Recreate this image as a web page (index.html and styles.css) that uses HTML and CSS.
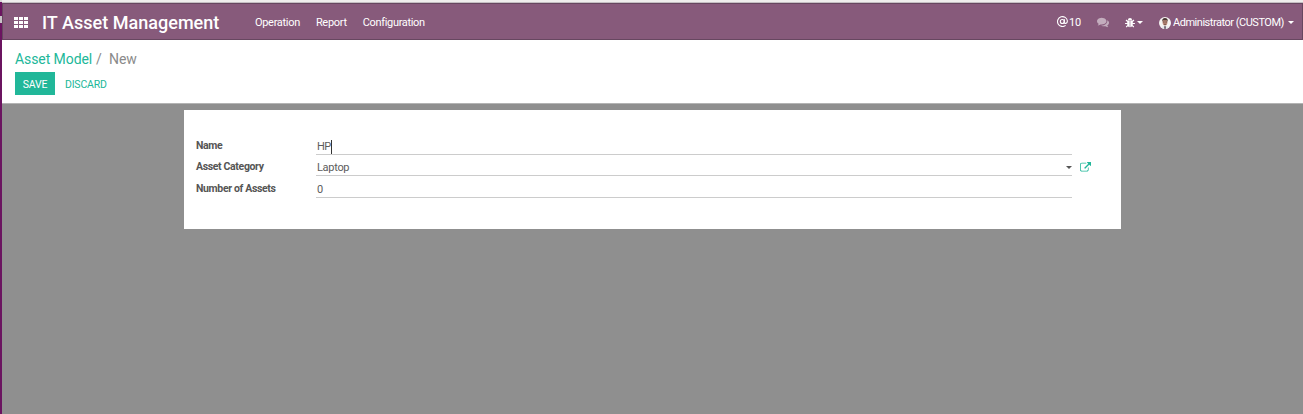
FILE: index.html
```html
<!DOCTYPE html>
<html lang="en">
<head>
<meta charset="utf-8">
<title>New - IT Asset Management</title>
<link rel="stylesheet" href="styles.css">
</head>
<body>
<div class="edge"></div>
<div class="app">
  <header class="navbar">
    <svg class="apps" viewBox="0 0 14 11"><path d="M0 0h4v3H0zM5 0h4v3H5zM10 0h4v3h-4zM0 4h4v3H0zM5 4h4v3H5zM10 4h4v3h-4zM0 8h4v3H0zM5 8h4v3H5zM10 8h4v3h-4z"/></svg>
    <h1 class="brand">IT Asset Management</h1>
    <nav class="menu"><a>Operation</a><a>Report</a><a>Configuration</a></nav>
    <div class="systray">
      <svg class="at" viewBox="0 0 11 11"><g fill="none" stroke="#fff" stroke-width="1.100"><circle cx="5.300" cy="5.500" r="2"/><path d="M7.500 3.200L7.200 6.400C7.200 8 10.400 7.800 10.400 5A4.950 4.950 0 1 0 8.600 9.400"/></g></svg>
      <span class="count">10</span>
      <svg class="comments" viewBox="0 0 1792 1792"><path d="M1408 768q0 139-94 257t-256.500 186.500-353.500 68.500q-86 0-176-16-124 88-278 128-36 9-86 16h-3q-11 0-20.500-8t-11.500-21q-1-3-1-6.500t.5-6.500 2-6l2.500-5 3.500-5.500 4-5 4.500-5 4-4.500q5-6 23-25t26-29.500 22.500-29 25-38.500 20.500-44q-124-72-195-177t-71-224q0-139 94-257t256.500-186.500 353.500-68.500 353.500 68.500 256.500 186.500 94 257zm384 256q0 120-71 224.500t-195 176.500q10 24 20.500 44t25 38.500 22.500 29 26 29.500 23 25q1 1 4 4.500t4.500 5 4 5 3.500 5.500l2.500 5 2 6 .5 6.500-1 6.500q-3 14-13 22t-22 7q-50-7-86-16-154-40-278-128-90 16-176 16-271 0-472-132 58 4 88 4 161 0 309-45t264-129q125-92 192-212t67-254q0-77-23-152 129 71 204 178t75 230z"/></svg>
      <svg class="bug" viewBox="0 0 10 10"><path d="M2.900 2.200a2.100 2.100 0 0 1 4.200 0z"/><path d="M2.200 2.600h2.500v6.600C3 9 2.200 7.800 2.200 6zM5.300 2.600H7.800V6c0 1.800-.8 3-2.500 3.200z"/><path d="M1 2l1.700 1.700M9 2L7.300 3.700M.1 5.500h2.700M9.900 5.500H7.200M1.200 9l1.700-1.700M8.800 9L7.100 7.300" stroke="#fff" stroke-width="1.100"/></svg>
      <i class="caret bug-caret"></i>
      <svg class="avatar" viewBox="0 0 12 12"><circle cx="6" cy="6" r="6" fill="#f5f3f2"/><path d="M2 10.500l2.600-1.700h2.800L10 10.500A6 6 0 0 1 2 10.500z" fill="#e5e6ea"/><ellipse cx="6" cy="5.200" rx="2.400" ry="3.300" fill="#b98777"/><path d="M3.300 5C2.800 2 4 1 6 1s3.200 1 2.700 4L8 3.300H4z" fill="#493832"/><path d="M4 5h1.600M6.400 5H8M5 7.300h2" stroke="#553c36" stroke-width=".7"/><path d="M5.500 9h1l.4 2.700H5.200z" fill="#514350"/></svg>
      <span class="user">Administrator (CUSTOM)</span>
      <i class="caret"></i>
    </div>
  </header>
  <section class="control">
    <div class="crumbs"><a>Asset Model</a><span class="slash">/</span><span>New</span></div>
    <div class="actions"><button class="save">SAVE</button><button class="discard">DISCARD</button></div>
  </section>
  <main class="content">
    <form class="sheet">
      <label>Name</label><div class="field name"><span>HP</span><i class="cursor"></i></div><span></span>
      <label>Asset Category</label><div class="field"><span>Laptop</span><i class="caret dark"></i></div>
      <svg class="external" viewBox="0 0 1792 1792"><path d="M1408 928v320q0 119-84.500 203.500t-203.500 84.500h-832q-119 0-203.500-84.500t-84.500-203.500v-832q0-119 84.500-203.500t203.500-84.500h704q14 0 23 9t9 23v64q0 14-9 23t-23 9h-704q-66 0-113 47t-47 113v832q0 66 47 113t113 47h832q66 0 113-47t47-113v-320q0-14 9-23t23-9h64q14 0 23 9t9 23zm384-864v512q0 26-19 45t-45 19-45-19l-176-176-652 652q-10 10-23 10t-23-10l-114-114q-10-10-10-23t10-23l652-652-176-176q-19-19-19-45t19-45 45-19h512q26 0 45 19t19 45z"/></svg>
      <label class="assets">Number of Assets</label><div class="field"><span>0</span></div><span></span>
    </form>
  </main>
</div>
</body>
</html>
```
FILE: styles.css
```css
* { box-sizing: border-box; }
body { margin: 0; height: 414px; display: flex; overflow: hidden; background: #efeeed; font: 11px/16px Roboto, sans-serif; color: #4c4c4c; }
svg { display: block; flex: none; }
.edge { width: 2px; flex: none; background: linear-gradient(#d9d4d6 0 2px, #6b1460 2px 16px, #c9c3c7 16px 23px, #6b1460 23px); }
.app { flex: 1; min-width: 0; display: flex; flex-direction: column; }
.app::before { content: ""; box-sizing: border-box; height: 3px; flex: none; border-bottom: 1px solid #c5bfc3; }
.navbar { height: 37px; flex: none; display: flex; align-items: center; padding: 0 8px 0 11px; background: #875a7b; border: 1px solid #674760; color: #fff; }
.apps { width: 14px; height: 11px; fill: #fff; margin-top: 1px; }
.brand { margin: 2px 0 0 14px; width: 213px; font-size: 18px; line-height: 24px; font-weight: 500; letter-spacing: .03px; white-space: nowrap; }
.menu { display: flex; gap: 16px; margin-top: 2px; letter-spacing: -.31px; }
.menu a:last-child { letter-spacing: -.33px; }
.systray { margin: 2px 0 0 auto; display: flex; align-items: center; white-space: nowrap; }
.at { width: 11px; height: 11px; margin-top: -2px; }
.count { margin-left: 1px; width: 28px; letter-spacing: -.2px; }
.comments { width: 12px; height: 12px; fill: #c3adbd; margin: -1px 16px 0 0; }
.bug { width: 10px; height: 10px; fill: #fff; }
.caret { border: 3px solid transparent; border-top-color: #fff; border-bottom: 0; width: 6px; height: 3px; flex: none; }
.bug-caret { margin: 0 16px 0 2px; }
.avatar { width: 12px; height: 12px; margin-right: 2px; }
.user { width: 115px; letter-spacing: -.48px; }
.control { height: 64px; flex: none; background: #fff; border-bottom: 1px solid #b4b4b4; padding: 9px 13px 0; }
.crumbs { font-size: 14px; line-height: 20px; color: #8a8a8a; display: flex; letter-spacing: -.08px; }
.crumbs a { color: #21b799; width: 81px; white-space: nowrap; }
.slash { width: 13px; }
.actions { display: flex; margin-top: 3px; }
button { border: 0; padding: 2px 0 0; height: 23px; background: none; font: 10.5px/20px Roboto, sans-serif; letter-spacing: -.2px; color: #21b799; }
.save { width: 40px; background: #21b799; color: #fff; }
.discard { margin-left: 10px; }
.content { flex: 1; background: #8f8f8f; padding: 6px 182px; }
.sheet { width: 937px; height: 119px; background: #fff; padding: 24px 12px; display: grid; grid-template-columns: 120px 756px 1fr; grid-template-rows: 21px 21px 22px; }
label { font-weight: 700; font-size: 10.5px; line-height: 16px; padding-top: 4px; letter-spacing: -.35px; color: #555; }
.assets { padding-top: 5px; }
.field { border-bottom: 1px solid #ccc; padding: 5px 0 0 1px; display: flex; align-items: center; line-height: 15px; color: #5c5c5c; letter-spacing: -.3px; }
.name { letter-spacing: -.6px; }
.cursor { width: 1px; height: 14px; background: #333; }
.dark { margin-left: auto; border-top-color: #555; }
.external { width: 11px; height: 11px; margin: 7px 0 0 8px; fill: #21b799; }
```
